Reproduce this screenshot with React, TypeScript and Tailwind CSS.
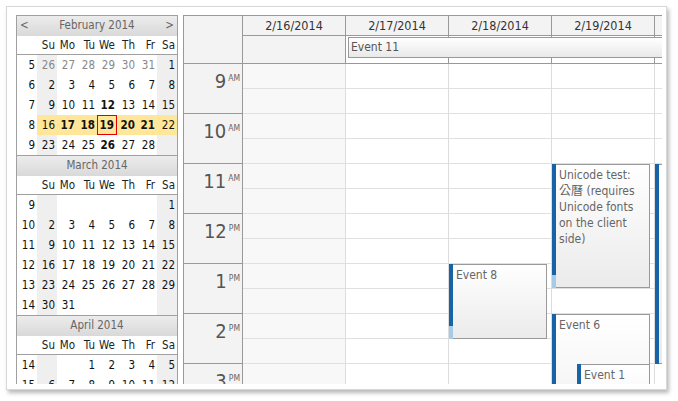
import React from "react";

const font =
  "font-['DejaVu_Sans_Condensed','DejaVu_Sans','Noto_Sans_CJK_TC',sans-serif]";

type Week = {
  n: number;
  days: (number | null)[];
  muted?: number[];
  selected?: boolean;
};

type Month = {
  title: string;
  arrows?: boolean;
  bold?: number[];
  outlined?: number;
  weeks: Week[];
};

const seq = (a: number, b: number) =>
  Array.from({ length: b - a + 1 }, (_, i) => a + i);

const months: Month[] = [
  {
    title: "February 2014",
    arrows: true,
    bold: [12, 17, 18, 19, 20, 21, 26],
    outlined: 19,
    weeks: [
      { n: 5, days: [26, 27, 28, 29, 30, 31, 1], muted: [0, 1, 2, 3, 4, 5] },
      { n: 6, days: seq(2, 8) },
      { n: 7, days: seq(9, 15) },
      { n: 8, days: seq(16, 22), selected: true },
      { n: 9, days: [...seq(23, 28), null] },
    ],
  },
  {
    title: "March 2014",
    weeks: [
      { n: 9, days: [null, null, null, null, null, null, 1] },
      { n: 10, days: seq(2, 8) },
      { n: 11, days: seq(9, 15) },
      { n: 12, days: seq(16, 22) },
      { n: 13, days: seq(23, 29) },
      { n: 14, days: [30, 31, null, null, null, null, null] },
    ],
  },
  {
    title: "April 2014",
    weeks: [
      { n: 14, days: [null, null, 1, 2, 3, 4, 5] },
      { n: 15, days: seq(6, 12) },
    ],
  },
];

const dayNames = ["Su", "Mo", "Tu", "We", "Th", "Fr", "Sa"];

function MonthNav({ m }: { m: Month }) {
  return (
    <div>
      <div className="h-[21px] border-t border-[#a0a0a0] bg-linear-to-b from-[#ececec] to-[#d9d9d9] flex items-center justify-between px-[3px] text-[#666] text-[11.5px]">
        <span className="w-[10px]">{m.arrows ? "<" : ""}</span>
        <span>{m.title}</span>
        <span className="w-[10px] text-right">{m.arrows ? ">" : ""}</span>
      </div>
      <div className="h-[19px] flex border-b border-[#a0a0a0] bg-white text-[#222]">
        <div className="w-[20px]" />
        {dayNames.map((d) => (
          <div key={d} className="w-[20px] text-right pr-[2px] leading-[18px]">
            {d}
          </div>
        ))}
      </div>
      {m.weeks.map((w) => (
        <div key={w.n} className="h-[20px] flex leading-[20px] text-[#111]">
          <div className="w-[20px] text-right pr-[2px] bg-white">{w.n}</div>
          {w.days.map((d, i) => {
            const weekend = i === 0 || i === 6;
            const muted = w.muted?.includes(i);
            const bold = d !== null && !muted && m.bold?.includes(d);
            const outlined = d !== null && !muted && m.outlined === d;
            return (
              <div
                key={i}
                className={`w-[20px] h-[20px] text-right pr-[2px] ${
                  w.selected
                    ? "bg-[#ffe699]"
                    : weekend
                    ? "bg-[#efefef]"
                    : "bg-white"
                } ${muted ? "text-[#888]" : ""} ${bold ? "font-bold" : ""} ${
                  outlined ? "border border-[#e00000] leading-[18px] pr-[1px]" : ""
                }`}
              >
                {d ?? ""}
              </div>
            );
          })}
        </div>
      ))}
    </div>
  );
}

const dates = ["2/16/2014", "2/17/2014", "2/18/2014", "2/19/2014", "2/20/2014"];
const hours: [string, string][] = [
  ["9", "AM"],
  ["10", "AM"],
  ["11", "AM"],
  ["12", "PM"],
  ["1", "PM"],
  ["2", "PM"],
  ["3", "PM"],
  ["4", "PM"],
];

const evBox =
  "flex-1 border border-l-0 border-[#999] bg-linear-to-b from-white to-[#ebebeb] pl-[3px] pt-[2px] text-[#666] text-[12px] leading-[16px] overflow-hidden";

function DayColumn({ idx }: { idx: number }) {
  return (
    <div
      className={`w-[103px] shrink-0 border-r border-[#dcdcdc] relative ${
        idx === 0 ? "bg-[#f8f8f8]" : "bg-white"
      }`}
    >
      {Array.from({ length: 16 }).map((_, i) => (
        <div key={i} className="h-[25px] border-b border-[#e0e0e0]" />
      ))}

      {idx === 2 && (
        <div className="absolute left-0 top-[200px] w-[98px] h-[75px] flex">
          <div className="w-[4px] bg-[#a6cbea] flex flex-col">
            <div className="h-[62px] bg-[#1763a6]" />
          </div>
          <div className={evBox}>Event 8</div>
        </div>
      )}

      {idx === 3 && (
        <>
          <div className="absolute left-0 top-[100px] w-[98px] h-[124px] flex">
            <div className="w-[4px] bg-[#a6cbea] flex flex-col">
              <div className="h-[111px] bg-[#1763a6]" />
            </div>
            <div className={`${evBox} whitespace-nowrap`}>
              Unicode test:
              <br />
              公曆 (requires
              <br />
              Unicode fonts
              <br />
              on the client
              <br />
              side)
            </div>
          </div>
          <div className="absolute left-0 top-[250px] w-[98px] h-[150px] flex">
            <div className="w-[4px] bg-[#1763a6]" />
            <div className={evBox}>Event 6</div>
          </div>
          <div className="absolute left-[25px] top-[300px] w-[73px] h-[100px] flex">
            <div className="w-[4px] bg-[#1763a6]" />
            <div className={evBox}>Event 1</div>
          </div>
        </>
      )}

      {idx === 4 && (
        <div className="absolute left-0 top-[100px] w-[98px] h-[200px] flex">
          <div className="w-[4px] bg-[#1763a6]" />
          <div className={evBox}>Event 7</div>
        </div>
      )}
    </div>
  );
}

function Calendar() {
  return (
    <div className="w-[479px] h-[369px] overflow-hidden border-l border-t border-[#999] shrink-0">
      {/* header */}
      <div className="flex h-[48px] relative">
        <div className="w-[59px] shrink-0 h-[48px] border-r border-b border-[#999] bg-[#f3f3f3]" />
        {dates.map((d, i) => (
          <div key={d} className="w-[103px] shrink-0 flex flex-col">
            <div className="h-[20px] border-r border-b border-[#999] bg-[#f3f3f3] text-center text-[#333] text-[12.5px] leading-[19px]">
              {d}
            </div>
            <div
              className={`h-[28px] border-r border-b border-[#999] ${
                i === 0 ? "bg-[#f3f3f3]" : "bg-white"
              }`}
            />
          </div>
        ))}
        <div className="absolute left-[164px] top-[21px] w-[340px] h-[21px] border border-[#999] bg-linear-to-b from-white to-[#e9e9e9] pl-[2px] text-[#555] text-[12px] leading-[19px]">
          Event 11
        </div>
      </div>

      {/* body */}
      <div className="flex">
        <div className="w-[59px] shrink-0 border-r border-[#999] bg-[#f3f3f3]">
          {hours.map(([h, ap]) => (
            <div
              key={h}
              className="h-[50px] border-b border-[#999] flex justify-end items-start pr-[2px] pt-[4px] text-[#555]"
            >
              <span className="text-[20px] leading-[26px]">{h}</span>
              <span className="text-[8.5px] leading-[10px] mt-[5px] ml-[2px] text-[#666]">
                {ap}
              </span>
            </div>
          ))}
        </div>
        {dates.map((d, i) => (
          <DayColumn key={d} idx={i} />
        ))}
      </div>
    </div>
  );
}

export default function App() {
  return (
    <div className={`w-[678px] h-[401px] bg-white pt-[6px] pl-[6px] ${font} text-[11.5px]`}>
      <div className="w-[661px] h-[384px] border border-[#d8d8d8] shadow-[2px_3px_4px_rgba(0,0,0,0.28)] bg-white pl-[9px] pt-[8px] flex gap-[5px] overflow-hidden">
        <div className="w-[162px] h-[369px] overflow-hidden border-l border-r border-[#a0a0a0] shrink-0">
          {months.map((m) => (
            <MonthNav key={m.title} m={m} />
          ))}
        </div>
        <Calendar />
      </div>
    </div>
  );
}
